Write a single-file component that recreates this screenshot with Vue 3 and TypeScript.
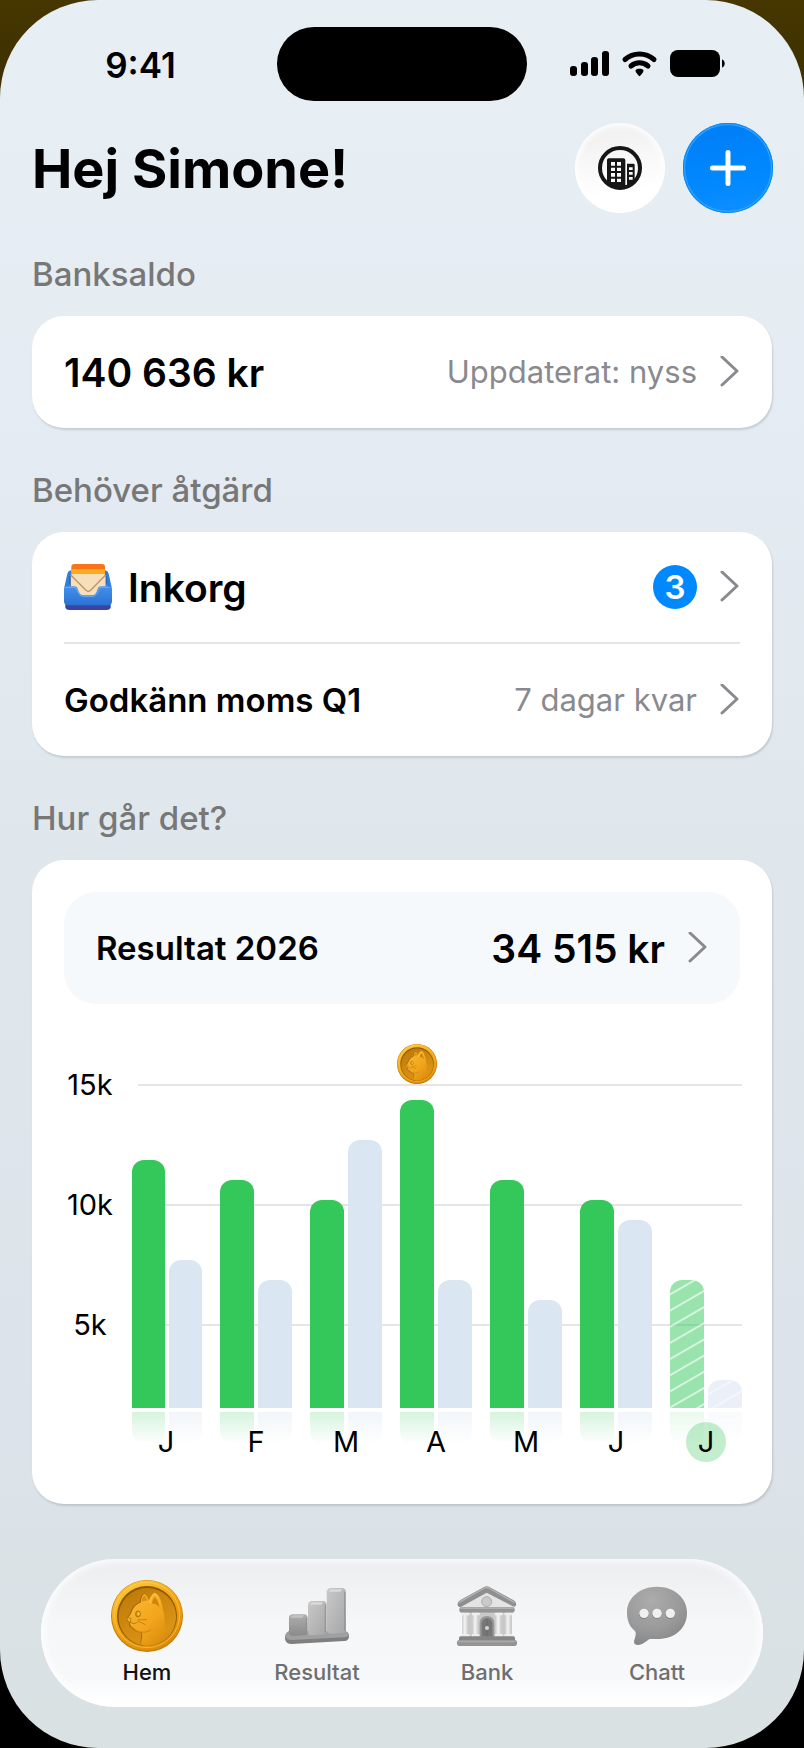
<script setup lang="ts">
interface Month {
  id: number
  label: string
  income: number
  previous: number
  best?: boolean
  current?: boolean
}

interface Tab {
  id: string
  label: string
  active?: boolean
}

const ticks: string[] = ['15k', '10k', '5k']

const months: Month[] = [
  { id: 1, label: 'J', income: 248, previous: 148 },
  { id: 2, label: 'F', income: 228, previous: 128 },
  { id: 3, label: 'M', income: 208, previous: 268 },
  { id: 4, label: 'A', income: 308, previous: 128, best: true },
  { id: 5, label: 'M', income: 228, previous: 108 },
  { id: 6, label: 'J', income: 208, previous: 188 },
  { id: 7, label: 'J', income: 128, previous: 28, current: true },
]

const tabs: Tab[] = [
  { id: 'home', label: 'Hem', active: true },
  { id: 'result', label: 'Resultat' },
  { id: 'bank', label: 'Bank' },
  { id: 'chat', label: 'Chatt' },
]
</script>

<template>
  <div class="screen">
    <svg class="defs" width="0" height="0" aria-hidden="true">
      <defs>
        <linearGradient id="rim" x1="0.2" y1="0" x2="0.7" y2="1">
          <stop offset="0" stop-color="#ffc93a" />
          <stop offset="0.5" stop-color="#f3a30e" />
          <stop offset="1" stop-color="#d98a08" />
        </linearGradient>
        <linearGradient id="well" x1="0" y1="0" x2="0.6" y2="1">
          <stop offset="0" stop-color="#b97708" />
          <stop offset="0.55" stop-color="#d0890f" />
          <stop offset="1" stop-color="#dc9616" />
        </linearGradient>
        <linearGradient id="fur" x1="0" y1="0" x2="0.8" y2="1">
          <stop offset="0" stop-color="#fbba32" />
          <stop offset="0.6" stop-color="#f2a51d" />
          <stop offset="1" stop-color="#d98b0c" />
        </linearGradient>
        <linearGradient id="greyLight" x1="0" y1="0" x2="1" y2="1">
          <stop offset="0" stop-color="#c9c9c9" />
          <stop offset="1" stop-color="#a6a6a6" />
        </linearGradient>
        <linearGradient id="greyMid" x1="0" y1="0" x2="0" y2="1">
          <stop offset="0" stop-color="#adadad" />
          <stop offset="1" stop-color="#8b8b8b" />
        </linearGradient>
        <linearGradient id="column" x1="0" y1="0" x2="1" y2="0">
          <stop offset="0" stop-color="#d2d2d2" />
          <stop offset="0.4" stop-color="#f4f4f4" />
          <stop offset="1" stop-color="#c2c2c2" />
        </linearGradient>
        <radialGradient id="bubble" cx="0.4" cy="0.25" r="0.8">
          <stop offset="0" stop-color="#acacac" />
          <stop offset="0.6" stop-color="#9a9a9a" />
          <stop offset="1" stop-color="#858585" />
        </radialGradient>
        <linearGradient id="tray" x1="0" y1="0" x2="0" y2="1">
          <stop offset="0" stop-color="#4390ea" />
          <stop offset="1" stop-color="#2b72d3" />
        </linearGradient>
        <symbol id="coin" viewBox="0 0 72 72">
          <circle cx="36" cy="36" r="36" fill="#c17a08" />
          <circle cx="36" cy="35.5" r="35.2" fill="url(#rim)" />
          <circle cx="36" cy="35" r="32.6" fill="none" stroke="#ffd562" stroke-width="1" opacity="0.55" />
          <circle cx="36" cy="36" r="30" fill="#8e5803" />
          <circle cx="36.3" cy="36.8" r="28.8" fill="url(#well)" />
          <path d="M29.5 65C29.4 61 30.2 57 30.3 52.8C26.5 52.6 22.6 50.8 20.6 47.6C17.6 46 18.4 44.2 18.2 42.4C15.6 41 15 38 16.8 36.6C19 34.6 19.6 31.6 20.4 29.4C21.8 26 25.4 23.4 28.8 22C29 18.4 30.8 13.6 33.6 13.6C36 14.4 37.2 18 38.4 20.6Z" fill="#8a5502" opacity="0.65" />
          <path d="M30.4 64.4C30.8 60.4 31.6 56.4 31 52.2C27 52 23.8 50.6 21.8 47.4C19.4 46.4 19.2 44.4 19 42.2C16.4 41 15.6 38.4 17.4 37C19.6 35 20.6 32.4 21.4 30C22.8 26.6 26 23.8 29.8 22.4C30 18.8 31.2 14.6 33.4 14C35.8 14.6 37 18 38 20.2C39.6 16.4 41.6 13 43.8 12.8C47.8 13.8 51.2 21.4 51.8 29.2C53.6 34 54 40 53.6 44C54.4 48.6 57.4 51.6 58.6 53.8C53.6 61 45.6 65.8 36 65.8C34 65.7 32 65.2 30.4 64.4Z" fill="url(#fur)" />
          <path d="M30.8 21.6C31 18.4 32 16 33.3 15.4C34.8 16.4 35.6 18.4 36.4 20.4Z" fill="#d98f10" />
          <path d="M39.2 24C39.6 19.6 41.6 15.2 43.8 14.6C46.8 16 49 21.4 49.4 26.6C49.6 21 46.4 15 43.9 13.6C41.8 14.6 39.4 18.4 38.4 22.6Z" fill="#ffd468" />
          <path d="M41 23.6C41.4 20 42.6 17.6 44 17.2C46 18.6 47.6 22.4 48.4 27.4C46.6 25 44 23.8 41 23.6Z" fill="#cf8509" />
          <ellipse cx="27" cy="34" rx="2.3" ry="3" fill="#e79a13" stroke="#a66a05" stroke-width="0.9" />
          <ellipse cx="27.6" cy="33.7" rx="0.9" ry="1.7" fill="#ffd05c" />
          <path d="M17.4 37.4L20 38.6L19.4 41.6M19.4 42.4C22 44 24.4 43.6 26 42.6" fill="none" stroke="#ad7006" stroke-width="0.8" stroke-linecap="round" />
          <path d="M27 39.8C30 39.8 33 40 35.6 39.6M27 41.4C29.6 42.2 32 43.2 34 44.4" fill="none" stroke="#b97908" stroke-width="0.8" stroke-linecap="round" />
          <path d="M21.8 47.4C24 50.4 27 51.8 31 52.2C34.6 52.4 37.6 51.6 39.6 50" fill="none" stroke="#cf870c" stroke-width="1" stroke-linecap="round" />
        </symbol>
      </defs>
    </svg>

    <header class="status">
      <time class="clock">9:41</time>
      <div class="island"></div>
      <svg class="signals" width="156" height="28" viewBox="0 0 156 28" role="img" aria-label="Signal, wifi, batteri">
        <rect x="0" y="16" width="7" height="10" rx="3" />
        <rect x="11" y="12" width="7" height="14" rx="3" />
        <rect x="21" y="7" width="7" height="19" rx="3" />
        <rect x="32" y="1" width="7" height="25" rx="3" />
        <g fill="none" stroke="#000" stroke-width="5" stroke-linecap="round">
          <path d="M55 9.500A22 22 0 0 1 84 9.500" />
          <path d="M61 16A13 13 0 0 1 78 16" />
        </g>
        <path d="M65.500 20.500C65.500 18 73.500 18 73.500 20.500C73.500 22.500 70.500 25.500 69.500 26.300C68.500 25.500 65.500 22.500 65.500 20.500Z" />
        <rect x="100" y="0" width="50" height="27" rx="8" />
        <path d="M152 9.500C155.600 10.500 155.600 16.500 152 17.500Z" />
      </svg>
    </header>

    <main class="content">
      <div class="greeting">
        <h1>Hej Simone!</h1>
        <button class="round light" type="button" aria-label="Företag">
          <svg width="44" height="44" viewBox="0 0 132 132">
            <circle cx="66" cy="66" r="60" fill="none" stroke="#161616" stroke-width="12" />
            <path d="M27 108V42Q27 37 32 37H76Q82 37 82 42V120Q66 132 46 122Z" fill="#161616" />
            <path d="M87 122V53H106Q110 53 110 57V108Z" fill="#161616" />
            <path d="M82 117H87V126H82Z" fill="#161616" />
            <g fill="#fafafa">
              <path d="M39 48h12v11h-12zM57 48h12v11h-12zM39 65h12v10h-12zM57 65h12v10h-12zM39 81h12v11h-12zM57 81h12v11h-12zM39 98h12v10h-12zM57 98h12v10h-12z" />
              <path d="M93 64h11v8h-11zM93 78h11v8h-11zM93 93h11v8h-11z" />
            </g>
          </svg>
        </button>
        <button class="round blue" type="button" aria-label="Lägg till">
          <svg width="36" height="36" viewBox="0 0 36 36">
            <path d="M18 2.500V33.500M2.500 18H33.500" fill="none" stroke="#fff" stroke-width="5" stroke-linecap="round" />
          </svg>
        </button>
      </div>

      <section>
        <h2>Banksaldo</h2>
        <div class="card">
          <a class="row" href="#saldo">
            <span class="big">140 636 kr</span>
            <span class="meta">Uppdaterat: nyss</span>
            <svg class="chevron" width="20" height="32" viewBox="0 0 20 32"><path d="M2 1L17 15L2 29" /></svg>
          </a>
        </div>
      </section>

      <section>
        <h2>Behöver åtgärd</h2>
        <div class="card">
          <a class="row" href="#inkorg">
            <svg class="inbox" width="48" height="46" viewBox="0 0 144 138">
              <path d="M20 19Q12 20 10 29L1 70H16L24 24ZM124 19Q132 20 134 29L143 70H128L120 24Z" fill="#2f7ee0" />
              <path d="M17 36H127V80H17Z" fill="#1f3f8c" />
              <rect x="22" y="0" width="101" height="50" rx="9" fill="#fb7319" />
              <rect x="22" y="15" width="101" height="50" rx="7" fill="#fdab22" />
              <path d="M20 38Q20 30 28 30H118Q125 30 125 38V110H20Z" fill="#f7dfba" />
              <path d="M21 34L66 79Q73 85 80 79L124 34" fill="none" stroke="#b9966c" stroke-width="4" />
              <path d="M4 112H140V130Q138 138 128 138H16Q6 138 4 130Z" fill="#3b41a6" />
              <path d="M0 74Q0 67 7 67H30Q40 67 42 77Q47 94 58 94H84Q96 94 100 77Q103 67 112 67H137Q144 67 144 74V114Q142 124 132 124H12Q2 124 0 114Z" fill="url(#tray)" />
              <path d="M4 72Q5 70 9 70H29Q38 70 40 79Q45 97 58 97H84Q98 97 103 79Q105 70 112 70H136" fill="none" stroke="#6faef5" stroke-width="3" />
            </svg>
            <span class="big named">Inkorg</span>
            <span class="badge">3</span>
            <svg class="chevron" width="20" height="32" viewBox="0 0 20 32"><path d="M2 1L17 15L2 29" /></svg>
          </a>
          <a class="row" href="#moms">
            <span class="strong">Godkänn moms Q1</span>
            <span class="meta">7 dagar kvar</span>
            <svg class="chevron" width="20" height="32" viewBox="0 0 20 32"><path d="M2 1L17 15L2 29" /></svg>
          </a>
        </div>
      </section>

      <section>
        <h2>Hur går det?</h2>
        <div class="card chart-card">
          <a class="row summary" href="#resultat">
            <span class="strong">Resultat 2026</span>
            <span class="big total">34 515 kr</span>
            <svg class="chevron" width="20" height="32" viewBox="0 0 20 32"><path d="M2 1L17 15L2 29" /></svg>
          </a>
          <div class="chart">
            <div class="scale">
              <div v-for="tick in ticks" :key="tick" class="tick">
                <span>{{ tick }}</span>
                <i></i>
              </div>
            </div>
            <div class="months">
              <div v-for="month in months" :key="month.id" class="month" :class="{ current: month.current }">
                <div class="bars">
                  <div class="stack">
                    <svg v-if="month.best" class="medal" width="40" height="40"><use href="#coin" /></svg>
                    <div class="bar income" :style="{ height: month.income + 'px' }"></div>
                  </div>
                  <div class="stack">
                    <div class="bar previous" :style="{ height: month.previous + 'px' }"></div>
                  </div>
                </div>
                <div class="mirror"><i class="income"></i><i class="previous"></i></div>
                <span class="name">{{ month.label }}</span>
              </div>
            </div>
          </div>
        </div>
      </section>
    </main>

    <nav class="tabs">
      <a v-for="tab in tabs" :key="tab.id" :href="'#' + tab.id" :class="{ active: tab.active }">
        <svg v-if="tab.id === 'home'" width="72" height="72"><use href="#coin" /></svg>
        <svg v-else-if="tab.id === 'result'" width="72" height="72" viewBox="0 0 216 216">
          <path d="M24 154H192Q204 156 204 170Q203 182 190 183L32 192Q14 192 12 176Q12 158 24 154Z" fill="#7f7f7f" />
          <path d="M24 154H192Q204 156 203 166Q200 172 190 172L32 180Q16 180 13 168Q14 158 24 154Z" fill="#a0a0a0" />
          <path d="M24 114Q24 103 36 103H68Q80 104 80 114V160Q79 166 70 166L36 168Q25 168 24 160Z" fill="url(#greyMid)" />
          <path d="M29 113Q30 106 39 106H69L64 113Z" fill="#c4c4c4" />
          <path d="M81 75Q82 63 94 63H126Q137 64 137 75V157Q136 163 127 163L92 166Q82 165 81 158Z" fill="url(#greyLight)" />
          <path d="M87 74Q88 67 96 67H126L121 74Z" fill="#d9d9d9" />
          <path d="M137 36Q138 25 150 24H183Q195 25 195 36V153Q193 158 184 159L150 161Q139 160 138 153Z" fill="url(#greyLight)" />
          <path d="M143 35Q145 28 153 28H184L178 35Z" fill="#dadada" />
          <path d="M191 36V152M133 74V157M76 114V160" stroke="#8d8d8d" stroke-width="4" fill="none" opacity="0.7" />
        </svg>
        <svg v-else-if="tab.id === 'bank'" width="72" height="72" viewBox="0 0 216 216">
          <path d="M107 26L186 76V86H30V76Z" fill="#e4e4e4" />
          <path d="M34 98H182V170H34Z" fill="#c9c9c9" />
          <path d="M20 76Q18 66 27 61L99 21Q107 16 115 21L188 61Q197 67 195 76Q193 83 184 78L107 38L31 80Q22 84 20 76Z" fill="#8f8f8f" />
          <path d="M24 67L101 24Q107 21 113 24L190 67" fill="none" stroke="#b4b4b4" stroke-width="4" />
          <circle cx="107" cy="65" r="15" fill="#c9c9c9" stroke="#adadad" stroke-width="3" />
          <rect x="25" y="81" width="166" height="17" rx="7" fill="#949494" />
          <rect x="28" y="82" width="160" height="5" rx="2" fill="#b0b0b0" />
          <g fill="url(#column)">
            <rect x="34" y="99" width="19" height="70" rx="3" />
            <rect x="65" y="99" width="19" height="70" rx="3" />
            <rect x="134" y="99" width="19" height="70" rx="3" />
            <rect x="163" y="99" width="19" height="70" rx="3" />
          </g>
          <g fill="#eee">
            <rect x="31" y="98" width="25" height="8" rx="3" />
            <rect x="62" y="98" width="25" height="8" rx="3" />
            <rect x="131" y="98" width="25" height="8" rx="3" />
            <rect x="160" y="98" width="25" height="8" rx="3" />
            <rect x="31" y="162" width="25" height="8" rx="3" />
            <rect x="62" y="162" width="25" height="8" rx="3" />
            <rect x="131" y="162" width="25" height="8" rx="3" />
            <rect x="160" y="162" width="25" height="8" rx="3" />
          </g>
          <path d="M86 170V128Q88 108 108 108Q128 108 130 128V170Z" fill="#979797" />
          <path d="M92 170V130Q94 115 108 115Q122 115 124 130V170Z" fill="#777" />
          <path d="M108 116V170" stroke="#656565" stroke-width="2" />
          <circle cx="108" cy="144" r="6" fill="#d4d4d4" />
          <rect x="24" y="169" width="168" height="16" rx="5" fill="#858585" />
          <rect x="18" y="180" width="180" height="18" rx="7" fill="#949494" />
          <rect x="22" y="182" width="172" height="5" rx="2" fill="#aaa" />
        </svg>
        <svg v-else width="72" height="72" viewBox="0 0 216 216">
          <path d="M108 20C159 20 198 53 198 98C198 145 161 177 108 177C98 177 92 177 86 177C76 182 66 195 51 195C39 195 37 186 41 177C44 167 46 160 42 153C26 140 18 121 18 98C18 53 57 20 108 20Z" fill="url(#bubble)" />
          <g fill="#6f6f6f" opacity="0.6">
            <circle cx="68" cy="103" r="14" /><circle cx="107" cy="103" r="14" /><circle cx="147" cy="103" r="14" />
          </g>
          <g fill="#f0f0f0">
            <circle cx="69" cy="100" r="14" /><circle cx="108" cy="100" r="14" /><circle cx="148" cy="100" r="14" />
          </g>
        </svg>
        <span>{{ tab.label }}</span>
      </a>
    </nav>
  </div>
</template>

<style>
body {
  margin: 0;
  background: linear-gradient(#463700, #3c2f00 100px, #000 1600px);
}
</style>

<style scoped>
.screen {
  box-sizing: border-box;
  min-height: 100vh;
  display: flex;
  flex-direction: column;
  padding: 0 32px 41px;
  border-radius: 98px;
  background: linear-gradient(#e8eff4, #e4ebf2 25%, #dfe7ec 50%, #dce3ea 80%, #d9e1e3);
  color: #000;
  font-family: Inter, "Liberation Sans", sans-serif;
  font-size: 33px;
  line-height: 40px;
}

.defs {
  position: absolute;
}

a {
  color: inherit;
  text-decoration: none;
}

.status {
  display: grid;
  grid-template-columns: 1fr 250px 1fr;
  align-items: center;
  padding-top: 27px;
}

.clock {
  justify-self: center;
  padding: 2px 28px 0 0;
  font-weight: 600;
  font-size: 35px;
}

.island {
  height: 74px;
  border-radius: 37px;
  background: #000;
}

.signals {
  justify-self: end;
  margin-right: 46px;
}

.content {
  display: flex;
  flex-direction: column;
}

.greeting {
  display: flex;
  align-items: center;
  gap: 18px;
  margin: 22px 0 36px;
}

h1 {
  flex: 1;
  margin: 0;
  padding-top: 2px;
  font-size: 54px;
  line-height: 64px;
  font-weight: 700;
}

.round {
  display: grid;
  place-items: center;
  width: 90px;
  height: 90px;
  padding: 0;
  border: 0;
  border-radius: 50%;
}

.round.light {
  background: linear-gradient(170deg, #f2f2f2 20%, #fafafa 50%, #fff 75%);
  box-shadow: inset 0 0 6px 2px #fff;
}

.round.blue {
  margin-right: -1px;
  background: linear-gradient(170deg, #007df5, #0088ff 60%, #1090ff);
  box-shadow: inset 0 0 0 1px #0a84f5, inset 0 0 1px 2px #38aaff;
}

h2 {
  margin: 0;
  padding: 5px 0 22px;
  color: #777;
  font-size: 33px;
  line-height: 40px;
  font-weight: 500;
}

section + section {
  margin-top: 37px;
}

.card {
  border-radius: 32px;
  padding: 0 32px;
  background: #fff;
  box-shadow: 1px 2px 2px rgba(60, 70, 80, 0.18);
}

.row {
  box-sizing: border-box;
  display: flex;
  align-items: center;
  min-height: 112px;
}

.row:not(:last-child):not(.summary) {
  border-bottom: 2px solid #e5e5e5;
}

.big {
  padding-top: 2px;
  font-size: 39px;
  font-weight: 600;
}

.named {
  margin-left: 16px;
}

.strong {
  font-weight: 600;
}

.meta,
.badge,
.total {
  margin-left: auto;
}

.meta {
  color: #8a8a8e;
  font-size: 31px;
  font-weight: 400;
}

.badge {
  width: 44px;
  height: 44px;
  border-radius: 50%;
  background: #0088ff;
  color: #fff;
  font-weight: 600;
  line-height: 44px;
  text-align: center;
}

.chevron {
  margin-left: 23px;
  fill: none;
  stroke: #8a8a8e;
  stroke-width: 3;
  stroke-linecap: round;
  stroke-linejoin: round;
}

.chart-card {
  padding: 32px 32px 42px;
}

.summary {
  padding: 0 32px;
  border-radius: 32px;
  background: #f5f9fc;
}

.chart {
  display: grid;
  margin: 21px -2px 0 0;
  font-size: 29px;
}

.scale,
.months {
  grid-area: 1 / 1;
}

.tick {
  display: flex;
  align-items: center;
  gap: 22px;
  height: 120px;
}

.tick span {
  width: 52px;
  text-align: center;
}

.tick i {
  flex: 1;
  height: 2px;
  background: #e5e5e5;
}

.months {
  display: grid;
  grid-template-columns: repeat(7, 1fr);
  gap: 18px;
  margin-left: 66px;
}

.month {
  display: flex;
  flex-direction: column;
}

.month:first-child .bars,
.month:first-child .mirror {
  padding-left: 2px;
}

.bars {
  display: flex;
  align-items: flex-end;
  gap: 4px;
  height: 383px;
}

.stack {
  flex: 1;
  display: flex;
  flex-direction: column;
  align-items: center;
}

.medal {
  margin: 0 -3px 16px;
}

.bar {
  width: 100%;
  border-radius: 12px 12px 0 0;
}

.income {
  background: #34c759;
}

.previous {
  background: #dae6f2;
}

.current .bar.income {
  background:
    repeating-linear-gradient(150deg, transparent 0 11px, rgba(255, 255, 255, 0.6) 12px 13px, transparent 14px),
    rgba(52, 199, 89, 0.5);
}

.current .bar.previous {
  background:
    repeating-linear-gradient(150deg, transparent 0 11px, rgba(255, 255, 255, 0.4) 12px 13px, transparent 14px),
    #ebf0f8;
}

.mirror {
  display: flex;
  gap: 4px;
  height: 32px;
  margin-top: 4px;
  opacity: 0.2;
}

.current .mirror {
  opacity: 0.1;
}

.mirror i {
  flex: 1;
  border-radius: 0 0 12px 12px;
  mask-image: linear-gradient(#000, transparent);
}

.mirror .previous {
  background: #bccfe3;
}

.name {
  align-self: center;
  width: 40px;
  height: 40px;
  margin-top: -22px;
  border-radius: 50%;
  text-align: center;
  z-index: 1;
}

.current .name {
  background: rgba(52, 199, 89, 0.3);
}

.tabs {
  display: grid;
  grid-template-columns: repeat(4, 1fr);
  margin: auto 9px 0;
  padding: 21px;
  border-radius: 74px;
  background: linear-gradient(#ebecee, #f1f2f4 20%, #f6f7f9 45%, #f7f8fa 80%, #fff 95%);
  box-shadow: inset 0 0 10px 2px #fff;
}

.tabs a {
  display: flex;
  flex-direction: column;
  align-items: center;
  gap: 6px;
  color: #6e6e70;
  font-size: 22px;
  line-height: 28px;
  font-weight: 500;
}

.tabs .active {
  color: #111;
}
</style>
